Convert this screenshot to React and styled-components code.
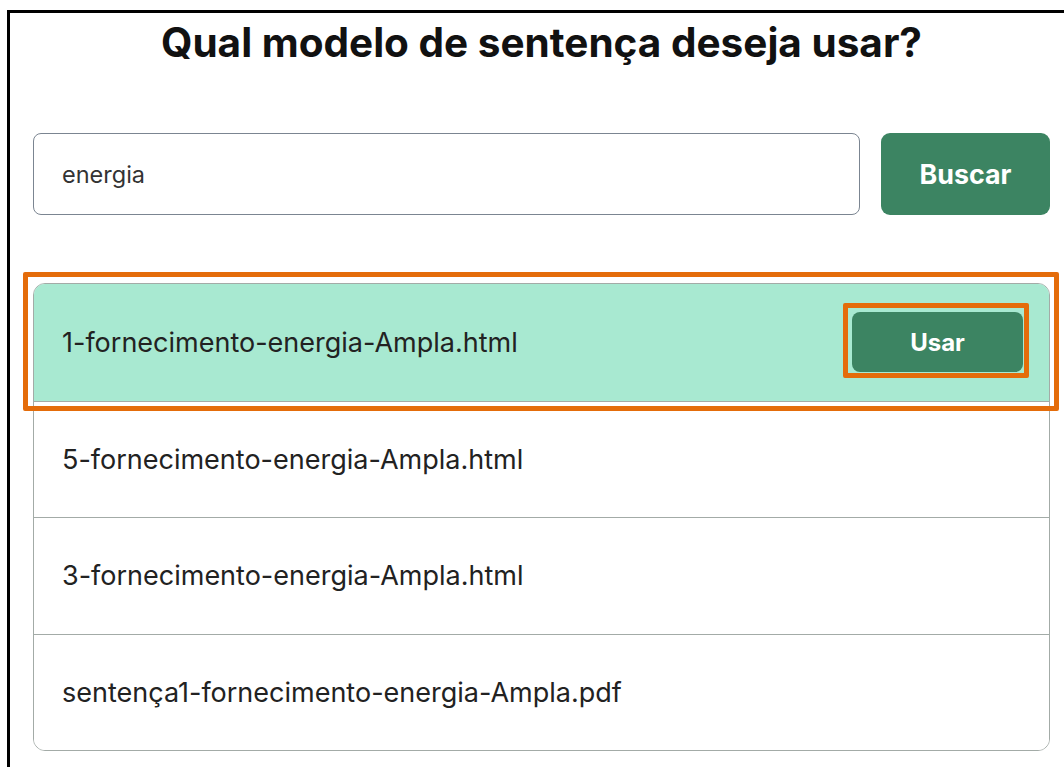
import React from 'react';
import styled, { createGlobalStyle } from 'styled-components';

const GlobalStyle = createGlobalStyle`
  html, body {
    margin: 0;
    padding: 0;
    background: #fff;
    overflow: hidden;
  }
  body {
    font-family: Inter, "Noto Sans", sans-serif;
  }
`;

const Frame = styled.div`
  position: relative;
  margin: 10px 0 0 7px;
  height: calc(100vh - 10px);
  border: 3px solid #000;
  border-right: none;
  border-bottom: none;
  box-sizing: border-box;
  padding: 0 0 0 23px;
  overflow: hidden;
`;

const Content = styled.div`
  width: 1017px;
  display: flex;
  flex-direction: column;
`;

const Title = styled.h1`
  margin: 6px 0 0;
  text-align: center;
  font-size: 40.5px;
  font-weight: 700;
  color: #111;
  line-height: 48px;
`;

const SearchRow = styled.form`
  display: flex;
  gap: 21px;
  margin-top: 66px;
  height: 82px;
`;

const SearchInput = styled.input`
  flex: 1;
  box-sizing: border-box;
  height: 100%;
  border: 1.5px solid #7b8591;
  border-radius: 8px;
  padding: 0 28px;
  font-family: Inter, sans-serif;
  font-size: 23.5px;
  color: #333;
  outline: none;
`;

const GreenButton = styled.button`
  box-sizing: border-box;
  border: none;
  background: #3c8462;
  color: #fff;
  font-family: Inter, sans-serif;
  font-weight: 700;
  border-radius: ${(p) => (p.$small ? '8px' : '9px')};
  width: ${(p) => (p.$small ? '171px' : '169px')};
  height: ${(p) => (p.$small ? '60px' : '100%')};
  font-size: ${(p) => (p.$small ? '24px' : '26.8px')};
  cursor: pointer;
`;

const List = styled.ul`
  list-style: none;
  margin: 68px 0 0;
  padding: 0;
  border: 1.5px solid #a3aba7;
  border-radius: 12px;
  overflow: hidden;
`;

const Row = styled.li`
  height: 116.5px;
  box-sizing: border-box;
  display: flex;
  align-items: center;
  justify-content: space-between;
  padding: 0 26px 0 28px;
  background: ${(p) => (p.$active ? '#a8e9d1' : '#fff')};
  font-size: 27px;
  color: #222;
  & + & {
    border-top: 1.5px solid #a3aba7;
  }
`;

const Mark = styled.div`
  position: absolute;
  box-sizing: border-box;
  border: 5px solid #e46c0a;
  border-radius: 2px;
  pointer-events: none;
`;

const files = [
  '1-fornecimento-energia-Ampla.html',
  '5-fornecimento-energia-Ampla.html',
  '3-fornecimento-energia-Ampla.html',
  'sentença1-fornecimento-energia-Ampla.pdf',
];

export default function App() {
  return (
    <>
      <GlobalStyle />
      <Frame>
        <Content>
          <Title>Qual modelo de sentença deseja usar?</Title>
          <SearchRow onSubmit={(e) => e.preventDefault()}>
            <SearchInput defaultValue="energia" />
            <GreenButton type="submit">Buscar</GreenButton>
          </SearchRow>
          <List>
            {files.map((f, i) => (
              <Row key={f} $active={i === 0}>
                <span>{f}</span>
                {i === 0 && <GreenButton $small>Usar</GreenButton>}
              </Row>
            ))}
          </List>
        </Content>
        <Mark style={{ left: 13, top: 259, width: 1036, height: 139 }} />
        <Mark style={{ left: 833, top: 290, width: 186, height: 75 }} />
      </Frame>
    </>
  );
}
